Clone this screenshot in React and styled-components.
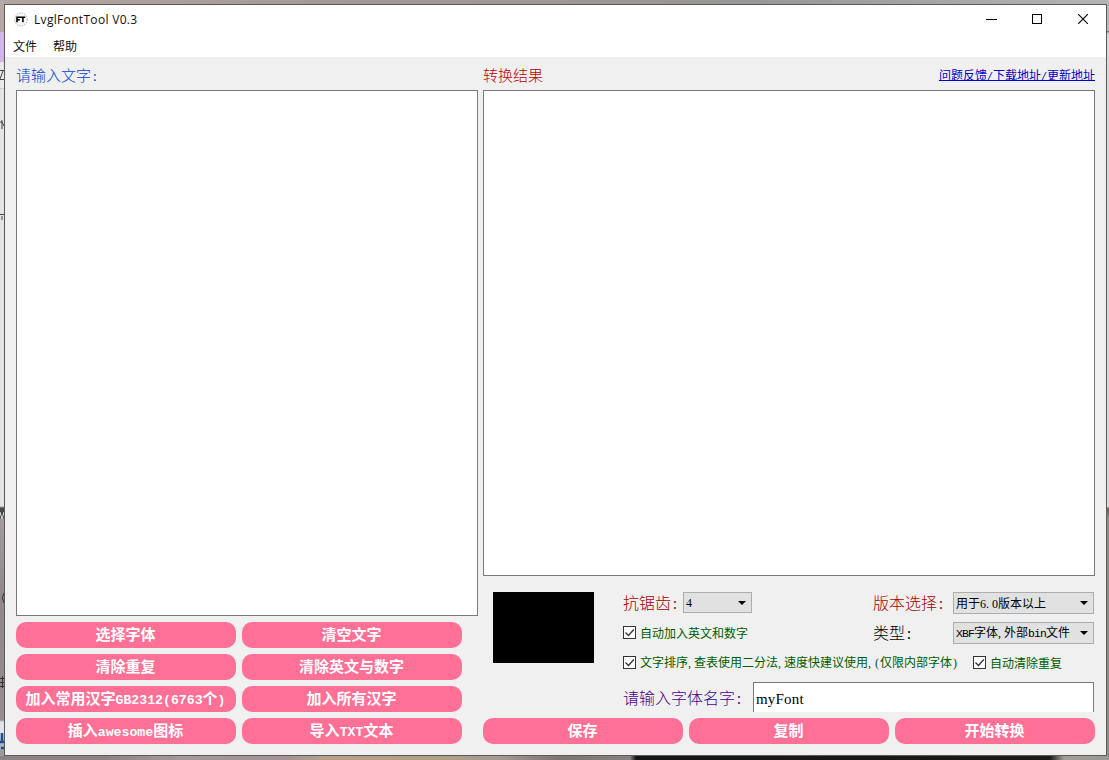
import React from "react";
import styled, { createGlobalStyle } from "styled-components";

const SANS = '"Noto Sans CJK SC", sans-serif';

const Global = createGlobalStyle`
  * { box-sizing: border-box; }
  body { margin: 0; overflow: hidden; }
`;

const Desktop = styled.div`
  position: relative;
  width: 1109px;
  height: 760px;
  padding: 4px 2px 4px 4px;
  background:
    linear-gradient(90deg, #8b8384 0 100px, #a39b9b 180px, #a39297 280px, #b5a08a 325px, #b1a081 440px, #a39a95 500px, #7c7574 560px, #87817f 630px, #161414 636px, #1c1919 1050px, #a29f99 1064px, #9b9996 100%) 0 756px / 1109px 4px no-repeat,
    linear-gradient(180deg, #b5a9a7 0 32px, #d3b4ec 32px 62px, #e9e9e9 62px 88px, #d2d2d2 88px 89px, #e4e4e4 89px 506px, #4b4848 508px 518px, #a39c9c 519px, #8f8788 600px, #988e90 720px, #dfe3ea 722px 732px, #99999b 752px) 0 0 / 4px 756px no-repeat,
    linear-gradient(180deg, #b9b9b9 0 31px, #777 31px 32px, #dadada 33px 507px, #6c6866 508px 512px, #918e8a 518px 100%) 1107px 0 / 2px 756px no-repeat,
    linear-gradient(90deg, #b1a4a1 0, #a09896 400px, #989696 750px, #b4b4b4 100%);
`;

const DesktopMarks = styled.svg`
  position: absolute;
  left: 0;
  top: 0;
`;

const Window = styled.main`
  height: 752px;
  display: flex;
  flex-direction: column;
  border: 1px solid #5b5856;
  background: #f0f0f0;
  font-family: ${SANS};
`;

const TitleBar = styled.header`
  height: 29px;
  display: flex;
  align-items: center;
  padding-left: 8px;
  background: #fff;
`;

const Title = styled.h1`
  flex: 1;
  margin: 0 0 0 5px;
  font: 400 12px/29px "Open Sans", sans-serif;
  letter-spacing: 0.32px;
  color: #111;
`;

const WindowButton = styled.button`
  width: 46px;
  height: 28px;
  margin-bottom: 2px;
  display: grid;
  place-items: center;
  padding: 0;
  border: 0;
  background: none;
`;

const MenuBar = styled.nav`
  height: 23px;
  display: flex;
  gap: 16px;
  padding-left: 8px;
  background: #fff;
  font-size: 12px;
  line-height: 23px;
  color: #111;
`;

const Body = styled.div`
  flex: 1;
  display: flex;
  gap: 5px;
  padding: 7px 11px 11px;
`;

const Column = styled.section`
  width: ${(p) => p.$width}px;
  display: flex;
  flex-direction: column;
`;

const Heading = styled.div`
  height: 26px;
  display: flex;
  justify-content: space-between;
`;

const Label = styled.span`
  width: ${(p) => (p.$width ? `${p.$width}px` : "auto")};
  font-size: ${(p) => p.$size || 16}px;
  line-height: ${(p) => p.$line || 20}px;
  font-weight: 300;
  white-space: pre;
  color: ${(p) => p.$color};
`;

const Link = styled.a`
  height: 17px;
  border-bottom: 1px solid #0000c8;
  font-size: 12px;
  line-height: 21px;
  font-weight: 400;
  white-space: pre;
  color: #0000c8;
`;

const Latin = styled.span`
  font-family: "Liberation Mono", monospace;
  font-size: ${(p) => p.$size || 0.8333}em;
  letter-spacing: ${(p) => p.$track || 0}px;
`;

const Digits = styled.span`
  font-family: "Liberation Serif", serif;
`;

const Cell = styled.span`
  display: inline-block;
  width: 0.5em;
  text-align: ${(p) => p.$align || "center"};
  font-family: "Liberation Serif", serif;
`;

const TextBox = styled.textarea`
  width: ${(p) => p.$width}px;
  height: ${(p) => p.$height}px;
  display: block;
  margin: 0;
  padding: 4px;
  resize: none;
  border: 1px solid #767a78;
  outline: 0;
  background: #fff;
`;

const ButtonGrid = styled.div`
  display: grid;
  grid-template-columns: repeat(${(p) => p.$columns}, ${(p) => p.$cell}px);
  gap: 6px;
  margin-top: ${(p) => p.$top}px;
`;

const PinkButton = styled.button`
  height: 26px;
  padding: 0 1px 2px 0;
  border: 0;
  border-radius: 10px;
  background: #ff7096;
  color: #fff;
  font: 700 15px/24px ${SANS};
  white-space: nowrap;
`;

const Options = styled.div`
  height: 136px;
  display: flex;
  margin-top: 16px;
  padding-left: 10px;
`;

const Preview = styled.div`
  width: 101px;
  height: 71px;
  margin-right: 29px;
  background: #000;
`;

const Form = styled.div`
  width: 472px;
  display: flex;
  flex-direction: column;
`;

const Row = styled.div`
  height: 30px;
  display: flex;
  align-items: flex-start;
`;

const Spacer = styled.div`
  flex: 1;
`;

const Select = styled.div`
  width: ${(p) => p.$width}px;
  height: ${(p) => p.$height || 22}px;
  margin-right: 1px;
  padding: 0 5px 0 2px;
  display: flex;
  align-items: center;
  justify-content: space-between;
  border: 1px solid #adadad;
  background: #e1e1e1;
  color: #000;
  font-size: 12px;
  line-height: 20px;
  white-space: pre;
`;

const CheckLabel = styled.label`
  display: flex;
  align-items: center;
  gap: 4px;
  height: 21px;
  margin-right: 15px;
  color: #005c00;
  font-size: 12px;
  line-height: 21px;
  white-space: pre;
`;

const NameRow = styled(Row)`
  padding-right: 1px;
`;

const NameLabel = styled(Label)`
  width: 130px;
  padding-top: 5px;
`;

const NameInput = styled.input`
  width: 341px;
  height: 30px;
  padding: 3px 2px 0;
  border: 1px solid #767a78;
  border-bottom: 0;
  outline: 0;
  background: #fff;
  color: #000;
  font: 15px "Liberation Serif", serif;
  letter-spacing: 0.2px;
`;

const Arrow = () => (
  <svg width="8" height="4" viewBox="0 0 8 4"><path d="M0 0h8L4 4z" fill="#000" /></svg>
);

const Check = ({ children }) => (
  <CheckLabel>
    <svg width="13" height="13" viewBox="0 0 13 13" fill="none">
      <rect x=".5" y=".5" width="12" height="12" fill="#fff" stroke="#333" />
      <path d="M2.500 6.500l3 3 5.300-6" stroke="#333" strokeWidth="1.300" />
    </svg>
    <span>{children}</span>
  </CheckLabel>
);

const Comma = () => <Cell $align="left">,</Cell>;

const AppIcon = () => (
  <svg width="16" height="16" viewBox="0 0 16 16" fill="none">
    <circle cx="8" cy="7.500" r="6.400" stroke="#aaa" strokeWidth=".9" strokeDasharray="1.500 1" fill="#f6f6f6" />
    <path d="M4 10.300V5.200H7.600M4 7.800h2.800M7.400 5.200H12.300M9.900 5.200V10.300" stroke="#000" strokeWidth="1.600" />
  </svg>
);

export default function App() {
  return (
    <>
      <Global />
      <Desktop>
        <DesktopMarks width="4" height="756" viewBox="0 0 4 756" fill="none" stroke="#444">
          <path d="M0 70.500h4M3 71l-3 8M0 79.500h4M0 122h2l2 4M2 120v9M0 214.500h4M2 216v4" />
          <path d="M0 512l2 7 2-7" stroke="#ddd" />
          <path d="M4 593q-3 5 0 10M0 678.500h4M0 682.500h4M0 686.500h4M2.500 676v12" stroke="#333" />
          <path d="M2 733v8M0 742h4M1 748h3" stroke="#174f9e" strokeWidth="2.500" />
        </DesktopMarks>
        <Window>
          <TitleBar>
            <AppIcon />
            <Title>LvglFontTool V0.3</Title>
            <WindowButton aria-label="Minimize">
              <svg width="12" height="10"><path d="M1 5.500h11" stroke="#000" /></svg>
            </WindowButton>
            <WindowButton aria-label="Maximize">
              <svg width="10" height="10"><rect x=".5" y=".5" width="9" height="9" fill="none" stroke="#000" /></svg>
            </WindowButton>
            <WindowButton aria-label="Close">
              <svg width="10" height="10"><path d="M0 0l10 10M10 0L0 10" stroke="#000" strokeWidth="1.100" /></svg>
            </WindowButton>
          </TitleBar>
          <MenuBar>
            <span>文件</span>
            <span>帮助</span>
          </MenuBar>
          <Body>
            <Column $width={462}>
              <Heading><Label $size={15} $line={22} $color="#0040d0">请输入文字<Cell>:</Cell></Label></Heading>
              <TextBox $width={462} $height={526} />
              <ButtonGrid $columns={2} $cell={220} $top={6}>
                <PinkButton>选择字体</PinkButton>
                <PinkButton>清空文字</PinkButton>
                <PinkButton>清除重复</PinkButton>
                <PinkButton>清除英文与数字</PinkButton>
                <PinkButton>加入常用汉字<Latin $size={0.88}>GB2312(6763</Latin>个<Latin $size={0.88}>)</Latin></PinkButton>
                <PinkButton>加入所有汉字</PinkButton>
                <PinkButton>插入<Latin $size={0.88}>awesome</Latin>图标</PinkButton>
                <PinkButton>导入<Latin $size={0.88}>TXT</Latin>文本</PinkButton>
              </ButtonGrid>
            </Column>
            <Column $width={612}>
              <Heading>
                <Label $size={15} $line={22} $color="#c00000">转换结果</Label>
                <Link>问题反馈<Latin>/</Latin>下载地址<Latin>/</Latin>更新地址</Link>
              </Heading>
              <TextBox $width={612} $height={486} />
              <Options>
                <Preview />
                <Form>
                  <Row>
                    <Label $width={60} $color="#a80000">抗锯齿<Cell>:</Cell></Label>
                    <Select $width={69} $height={21}><Digits>4</Digits><Arrow /></Select>
                    <Spacer />
                    <Label $width={80} $color="#a80000">版本选择<Cell>:</Cell></Label>
                    <Select $width={141}><span>用于<Digits>6. 0</Digits>版本以上</span><Arrow /></Select>
                  </Row>
                  <Row>
                    <Check>自动加入英文和数字</Check>
                    <Spacer />
                    <Label $width={80} $color="#000">类型<Cell>:</Cell></Label>
                    <Select $width={141}><span><Latin $size={0.95} $track={-0.84}>XBF</Latin>字体<Comma />外部<Latin $size={0.95} $track={-0.84}>bin</Latin>文件</span><Arrow /></Select>
                  </Row>
                  <Row>
                    <Check>文字排序<Comma />查表使用二分法<Comma />速度快建议使用<Comma /><Cell>(</Cell>仅限内部字体<Cell>)</Cell></Check>
                    <Check>自动清除重复</Check>
                  </Row>
                  <NameRow>
                    <NameLabel $color="#480088">请输入字体名字<Cell>:</Cell></NameLabel>
                    <NameInput defaultValue="myFont" />
                  </NameRow>
                </Form>
              </Options>
              <ButtonGrid $columns={3} $cell={200} $top={-10}>
                <PinkButton>保存</PinkButton>
                <PinkButton>复制</PinkButton>
                <PinkButton>开始转换</PinkButton>
              </ButtonGrid>
            </Column>
          </Body>
        </Window>
      </Desktop>
    </>
  );
}
